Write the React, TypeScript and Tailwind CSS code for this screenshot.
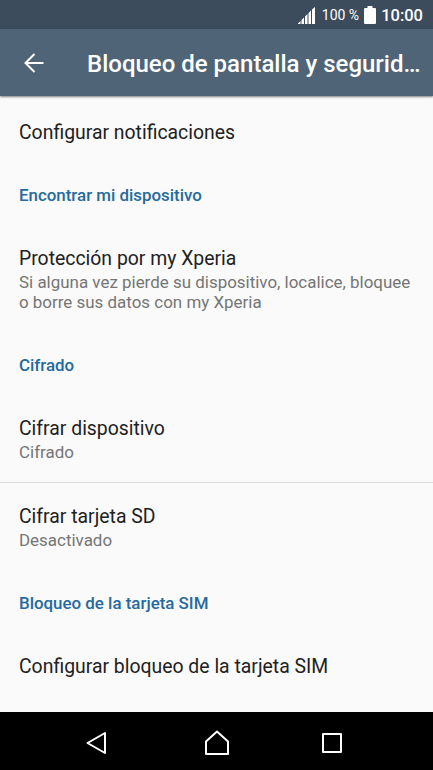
import { Fragment } from "react";

type Item = { title: string; summary?: string; className: string; divider?: boolean };
type Section = { heading?: string; items: Item[] };

const sections: Section[] = [
  { items: [{ title: "Configurar notificaciones", className: "h-[68px] pt-[22px]" }] },
  {
    heading: "Encontrar mi dispositivo",
    items: [
      {
        title: "Protección por my Xperia",
        summary: "Si alguna vez pierde su dispositivo, localice, bloquee o borre sus datos con my Xperia",
        className: "h-[109px] pt-[19px]",
      },
    ],
  },
  {
    heading: "Cifrado",
    items: [
      { title: "Cifrar dispositivo", summary: "Cifrado", className: "h-[87px] pt-[19px]", divider: true },
      { title: "Cifrar tarjeta SD", summary: "Desactivado", className: "h-[90px] pt-[20px]" },
    ],
  },
  {
    heading: "Bloqueo de la tarjeta SIM",
    items: [{ title: "Configurar bloqueo de la tarjeta SIM", className: "h-[69px] pt-[19px]" }],
  },
];

const StatusBar = () => (
  <div className="flex h-[29px] shrink-0 items-center justify-end bg-[#3d4c5c] pt-px pr-[10px] text-white">
    <svg width="17" height="17" viewBox="0 0 17 17" fill="currentColor">
      <path d="M0 17v-.5L2.500 14v3zM3.500 17v-4l2.500-2.500V17zM7 17V9.500L9.500 7v10zM10.500 17V6L13 3.500V17zM14 17V2.500L17 0v17z" />
    </svg>
    <span className="ml-[7px] text-[14px]">100 %</span>
    <svg className="ml-[5px]" width="12" height="18" viewBox="0 0 12 18" fill="currentColor">
      <path d="M3.500 0h5v2H11q1 0 1 1v14q0 1-1 1H1q-1 0-1-1V3q0-1 1-1h2.500z" />
    </svg>
    <span className="ml-[5px] pt-[2px] text-[16.500px] font-medium">10:00</span>
  </div>
);

const NavBar = () => (
  <div className="flex h-[58px] shrink-0 items-center bg-black pl-[84px] text-white">
    <svg width="265" height="30" viewBox="0 0 265 30" fill="none" stroke="currentColor" strokeWidth="2" strokeLinejoin="round">
      <path d="M21 7v20L3.500 17z" />
      <path d="M122 15.500L133 5.500l11 10V28h-22z" />
      <path d="M239 8h18v18h-18z" />
    </svg>
  </div>
);

export default function App() {
  return (
    <div className="flex h-[770px] w-[433px] flex-col overflow-hidden bg-[#fafafa] font-['Roboto',sans-serif]">
      <StatusBar />
      <header className="flex h-[67px] shrink-0 items-center bg-[#506478] text-white shadow-[0_1px_2px_rgba(0,0,0,0.5)]">
        <svg className="ml-[24px]" width="20" height="20" viewBox="0 0 20 20" fill="none" stroke="currentColor" strokeWidth="2">
          <path d="M19.500 10H2M10.500 1L1.500 10l9 9" />
        </svg>
        <h1 className="ml-[43px] pt-[2px] text-[24px] font-medium whitespace-nowrap">Bloqueo de pantalla y segurid…</h1>
      </header>
      <main className="flex-1 pt-px">
        {sections.map((section, i) => (
          <Fragment key={i}>
            {section.heading && (
              <h2 className="flex h-[61px] items-center px-[19px] text-[16.900px] font-medium text-[#256a9e]">
                {section.heading}
              </h2>
            )}
            {section.items.map((item) => (
              <div
                key={item.title}
                className={`px-[19px] ${item.className} ${item.divider ? "border-b border-[#dcdcdc]" : ""}`}
              >
                <div className="text-[19.400px] leading-[27px] text-[#212121]">{item.title}</div>
                {item.summary && <p className="text-[16.950px] leading-[20px] text-[#757575]">{item.summary}</p>}
              </div>
            ))}
          </Fragment>
        ))}
      </main>
      <NavBar />
    </div>
  );
}
